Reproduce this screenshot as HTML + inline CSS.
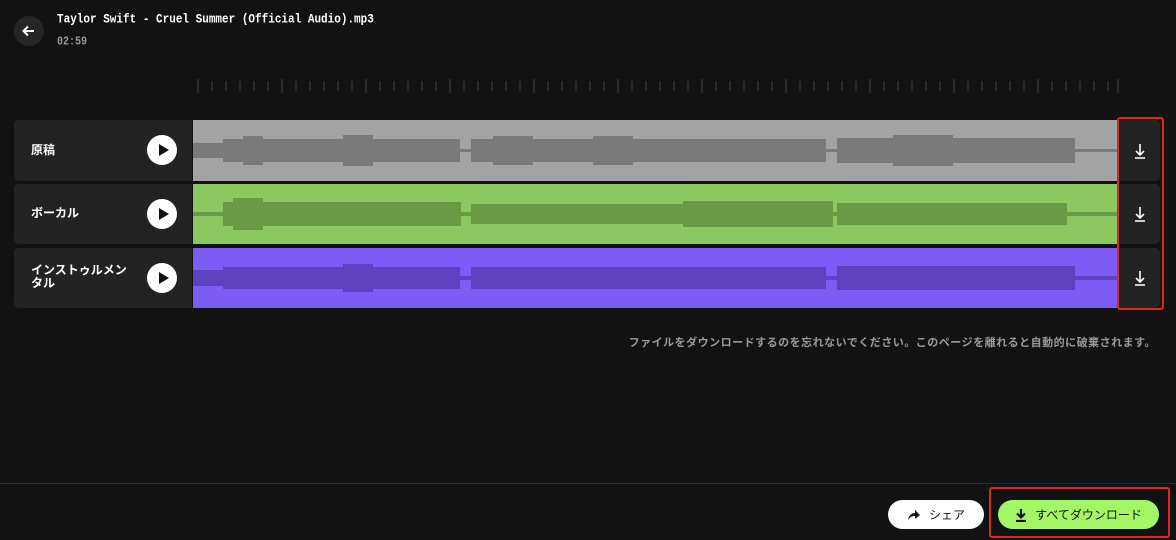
<!DOCTYPE html>
<html><head><meta charset="utf-8"><style>
*{margin:0;padding:0;box-sizing:border-box}
body{width:1176px;height:540px;background:#121212;font-family:"Liberation Sans","Noto Sans CJK JP",sans-serif;color:#fff;position:relative;overflow:hidden}
.abs{position:absolute}
.back{left:14px;top:16px;width:30px;height:30px;border-radius:50%;background:#262626}
.title{left:57px;top:13px;font-family:"Liberation Mono","Noto Sans CJK JP",monospace;font-size:11px;font-weight:bold;transform:scaleY(1.2);transform-origin:0 0}
.time{left:57px;top:36px;font-family:"Liberation Mono",monospace;font-size:10px;color:#9a9a9a;font-weight:bold;transform:scaleY(1.2);transform-origin:0 0}
.card{left:14px;width:178px;background:#232323;border-radius:5px 0 0 5px}
.lab{position:absolute;left:17px;font-size:12px;font-weight:bold;line-height:13px}
.play{position:absolute;left:133px;width:30px;height:30px;border-radius:50%;background:#fff}
.play:after{content:"";position:absolute;left:12px;top:9px;border-left:10px solid #111;border-top:6px solid transparent;border-bottom:6px solid transparent}
.wave{left:193px;width:924px}
.dl{left:1120px;width:40px;background:#232323;border-radius:0 5px 5px 0}
.red{border:2px solid #e0261e;border-radius:3px}
.btn{top:500px;height:29px;border-radius:15px;font-size:12px;display:flex;align-items:center;justify-content:center;gap:8px}
</style></head><body>
<div class="abs back"><svg width="30" height="30"><path d="M20 15H10M14 10.5L9.5 15L14 19.5" stroke="#fff" stroke-width="2" fill="none"/></svg></div>
<div class="abs title">Taylor Swift - Cruel Summer (Official Audio).mp3</div>
<div class="abs time">02:59</div>
<svg class="abs" style="left:190px;top:76px" width="935" height="20">
<g stroke="#444" stroke-width="1">
<path d="M8 3V17M22 5V15M36 5V15M50 5V15M64 5V15M78 5V15M92 3V17M106 5V15M120 5V15M134 5V15M148 5V15M162 5V15M176 3V17M190 5V15M204 5V15M218 5V15M232 5V15M246 5V15M260 3V17M274 5V15M288 5V15M302 5V15M316 5V15M330 5V15M344 3V17M358 5V15M372 5V15M386 5V15M400 5V15M414 5V15M428 3V17M442 5V15M456 5V15M470 5V15M484 5V15M498 5V15M512 3V17M526 5V15M540 5V15M554 5V15M568 5V15M582 5V15M596 3V17M610 5V15M624 5V15M638 5V15M652 5V15M666 5V15M680 3V17M694 5V15M708 5V15M722 5V15M736 5V15M750 5V15M764 3V17M778 5V15M792 5V15M806 5V15M820 5V15M834 5V15M848 3V17M862 5V15M876 5V15M890 5V15M904 5V15M918 5V15M928 3V17"/></g></svg>

<div class="abs card" style="top:120px;height:61px"><div class="lab" style="top:24px">原稿</div><div class="play" style="top:15px"></div></div>
<div class="abs card" style="top:184px;height:60px"><div class="lab" style="top:23px">ボーカル</div><div class="play" style="top:15px"></div></div>
<div class="abs card" style="top:248px;height:60px"><div class="lab" style="top:16px">インストゥルメン<br>タル</div><div class="play" style="top:15px"></div></div>

<svg class="abs wave" style="top:120px" width="924" height="61"><rect width="924" height="61" fill="#a3a3a3"/>
<g fill="#7a7a7a"><rect x="0" y="29" width="924" height="3"/><rect x="0" y="23" width="30" height="15"/><rect x="30" y="19" width="237" height="23"/><rect x="50" y="16" width="20" height="29"/><rect x="150" y="15" width="30" height="31"/><rect x="278" y="19" width="355" height="23"/><rect x="300" y="16" width="40" height="29"/><rect x="400" y="16" width="40" height="29"/><rect x="644" y="18" width="238" height="25"/><rect x="700" y="15" width="60" height="31"/></g></svg>
<svg class="abs wave" style="top:184px" width="924" height="60"><rect width="924" height="60" fill="#8dc75f"/>
<g fill="#6a9a45"><rect x="0" y="28" width="924" height="4"/><rect x="30" y="18" width="238" height="24"/><rect x="40" y="14" width="30" height="32"/><rect x="278" y="20" width="355" height="20"/><rect x="490" y="17" width="150" height="26"/><rect x="644" y="19" width="230" height="22"/></g></svg>
<svg class="abs wave" style="top:248px" width="924" height="60"><rect width="924" height="60" fill="#7b5cf5"/>
<g fill="#5d43c2"><rect x="0" y="28" width="924" height="4"/><rect x="0" y="22" width="30" height="16"/><rect x="30" y="19" width="237" height="22"/><rect x="150" y="16" width="30" height="28"/><rect x="278" y="19" width="355" height="22"/><rect x="644" y="18" width="238" height="24"/></g></svg>

<div class="abs dl" style="top:120px;height:61px"></div>
<div class="abs dl" style="top:184px;height:60px"></div>
<div class="abs dl" style="top:248px;height:60px"></div>
<svg class="abs" style="left:1120px;top:120px" width="40" height="190"><g stroke="#fff" stroke-width="1.6" fill="none">
<path d="M20 24V35M16 31L20 35L24 31M15 38H25"/><path d="M20 87V98M16 94L20 98L24 94M15 101H25"/><path d="M20 151V162M16 158L20 162L24 158M15 165H25"/></g></svg>
<div class="abs red" style="left:1117px;top:117px;width:47px;height:193px"></div>

<div class="abs" style="right:20px;top:334px;font-size:11px;color:#9a9a9a;font-weight:bold;letter-spacing:0.5px">ファイルをダウンロードするのを忘れないでください。このページを離れると自動的に破棄されます。</div>
<div class="abs" style="left:0;top:483px;width:1176px;height:1px;background:#2c2c2c"></div>
<div class="abs btn" style="left:888px;width:96px;background:#fff;color:#111"><svg width="14" height="12"><path d="M1 11C2 6 5 4 8 4V1L13 6L8 10V7C5 7 3 8 1 11Z" fill="#111"/></svg>シェア</div>
<div class="abs btn" style="left:998px;width:161px;background:#a3f765;color:#111"><svg width="12" height="14"><path d="M6 1V9M2 5.5L6 9.5L10 5.5M1 13H11" stroke="#111" stroke-width="2.2" fill="none"/></svg>すべてダウンロード</div>
<div class="abs red" style="left:989px;top:487px;width:181px;height:51px"></div>
</body></html>
